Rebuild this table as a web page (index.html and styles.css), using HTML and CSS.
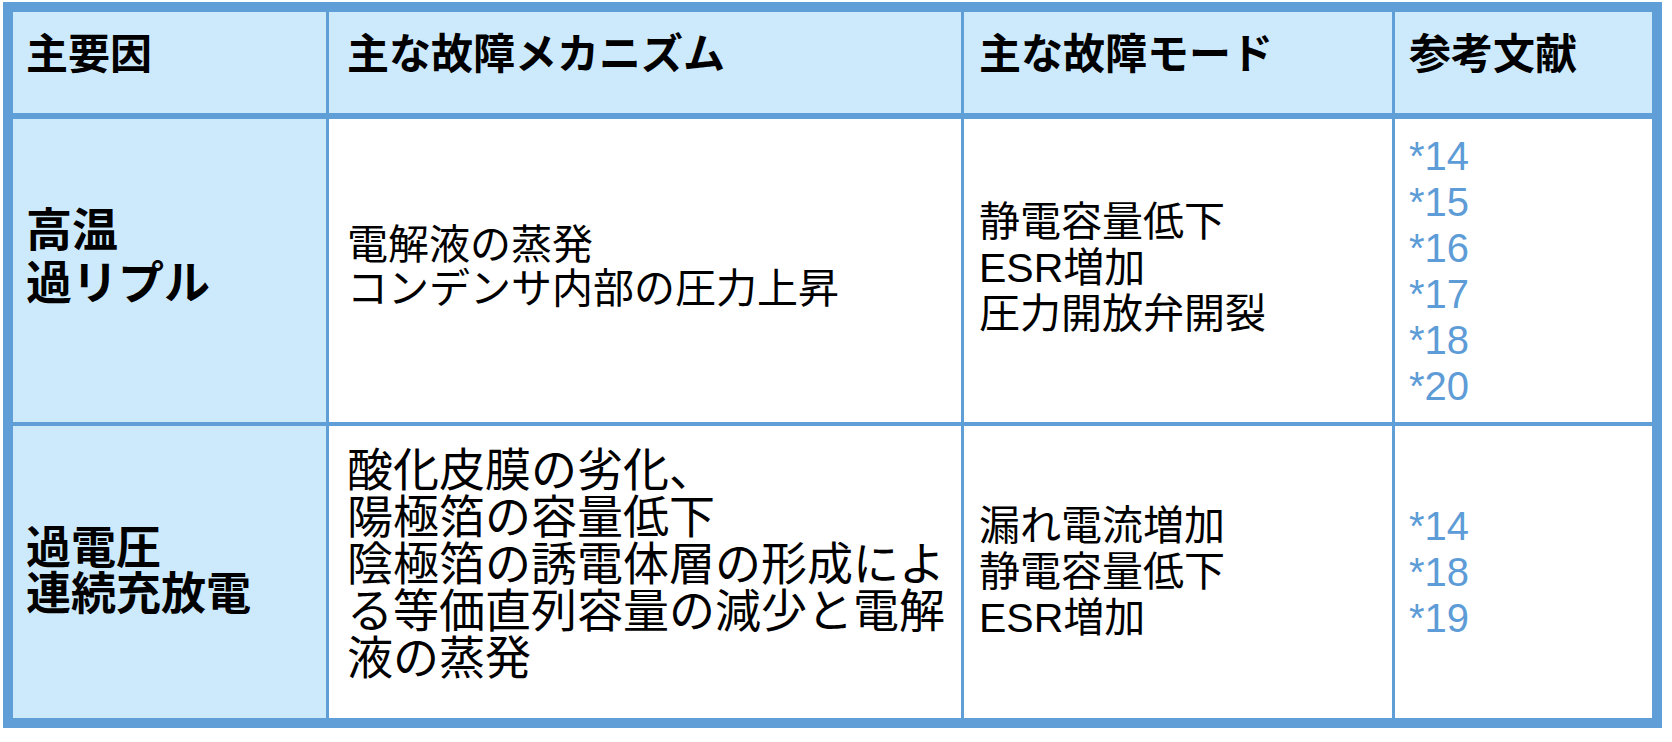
FILE: index.html
```html
<!DOCTYPE html>
<html lang="ja">
<head>
<meta charset="utf-8">
<title>故障メカニズム</title>
<link rel="stylesheet" href="styles.css">
</head>
<body>
<div class="table">
  <div class="cell head c1">主要因</div>
  <div class="cell head c2">主な故障メカニズム</div>
  <div class="cell head c3">主な故障モード</div>
  <div class="cell head c4">参考文献</div>

  <div class="cell factor factor-wide c1">高温<br>過リプル</div>
  <div class="cell body body-short c2">電解液の蒸発<br>コンデンサ内部の圧力上昇</div>
  <div class="cell body c3 lift">静電容量低下<br>ESR増加<br>圧力開放弁開裂</div>
  <div class="cell refs c4">*14<br>*15<br>*16<br>*17<br>*18<br>*20</div>

  <div class="cell factor c1">過電圧<br>連続充放電</div>
  <div class="cell body body-long c2">酸化皮膜の劣化、<br>陽極箔の容量低下<br>陰極箔の誘電体層の形成によ<br>る等価直列容量の減少と電解<br>液の蒸発</div>
  <div class="cell body c3">漏れ電流増加<br>静電容量低下<br>ESR増加</div>
  <div class="cell refs c4">*14<br>*18<br>*19</div>
</div>
</body>
</html>
```

FILE: styles.css
```css
html, body {
  margin: 0;
  padding: 0;
  background: #ffffff;
}

body {
  font-family: "Liberation Sans", "Noto Sans CJK JP", sans-serif;
  color: #000000;
}

.table {
  display: grid;
  grid-template-columns: 313px 632px 428px 257px;
  grid-template-rows: 103px 303px 292px;
  column-gap: 3px;
  row-gap: 4px;
  width: max-content;
  margin: 2px 0 0 3px;
  border: 10px solid #5f9ed6;
  background: #5f9ed6;
}

.cell {
  background: #ffffff;
  display: flex;
  flex-direction: column;
  justify-content: center;
  box-sizing: border-box;
}

.c1 { padding-left: 13px; background: #cdeafd; }
.c2 { padding-left: 18px; }
.c3 { padding-left: 15px; }
.c4 { padding-left: 14px; }

.head {
  background: #cdeafd;
  margin-bottom: 2px;
  justify-content: flex-start;
  padding-top: 18px;
  font-weight: bold;
  font-size: 42px;
  line-height: 50px;
}

.factor {
  font-weight: bold;
  font-size: 45px;
  line-height: 46px;
}

.factor-wide {
  font-size: 46px;
  line-height: 53px;
  padding-bottom: 28px;
}

.body {
  font-size: 41px;
  line-height: 46px;
}

.body-short {
  line-height: 44px;
  padding-bottom: 8px;
}

.body-long {
  font-size: 46px;
  line-height: 47px;
  padding-bottom: 16px;
}

.lift {
  padding-bottom: 6px;
}

.refs {
  font-family: "Liberation Sans", Arial, sans-serif;
  font-size: 40px;
  line-height: 46px;
  color: #5d9cd6;
}
```
